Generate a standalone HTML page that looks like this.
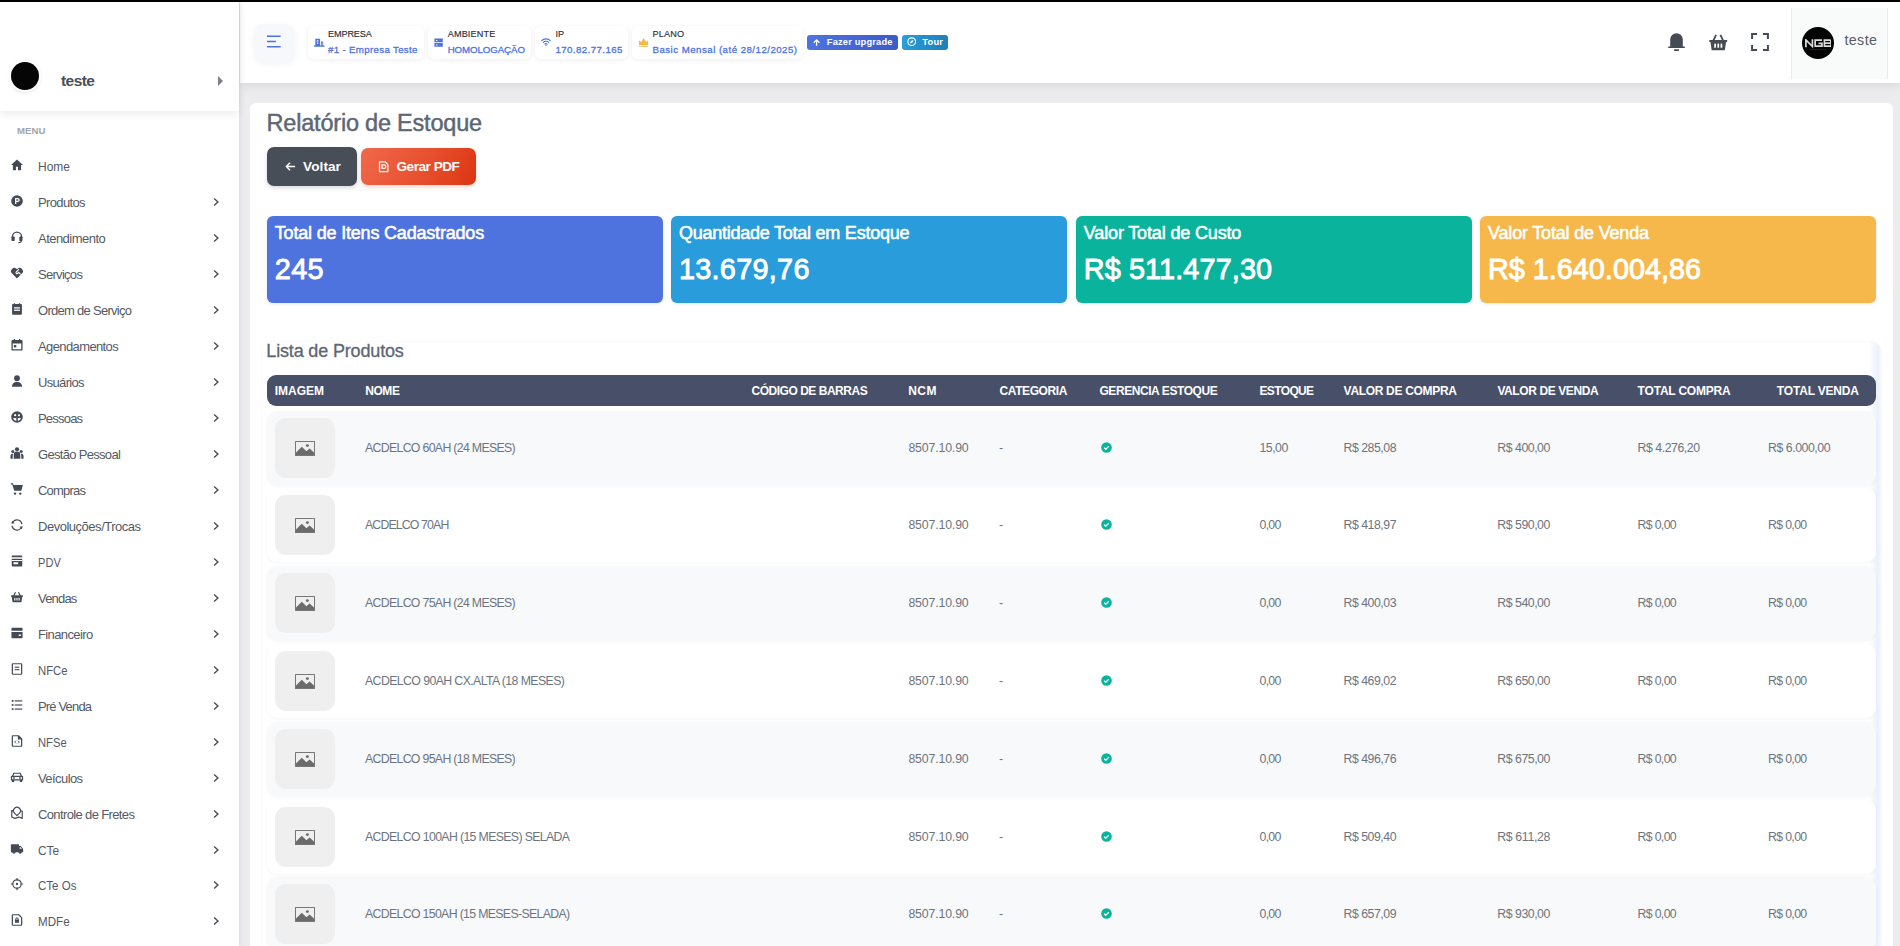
<!DOCTYPE html><html lang="pt-br"><head>
<meta charset="utf-8">
<title>Relatório de Estoque</title>
<style>
*{box-sizing:border-box;margin:0;padding:0}
html,body{width:1900px;height:946px;overflow:hidden}
body{font-family:"Liberation Sans",sans-serif;background:#ececef;position:relative;color:#495057}
span{white-space:nowrap}
#topbar{position:absolute;left:0;top:0;width:1900px;height:2px;background:#000;z-index:50}
/* sidebar */
#sidebar{position:absolute;left:0;top:0;width:239px;height:946px;background:#fff;box-shadow:0 0 5px rgba(60,65,80,.13);z-index:20}
#sb-user{position:absolute;left:0;top:0;width:239px;height:111px;background:#fff;box-shadow:0 3px 8px rgba(40,40,50,.09)}
#sb-user .av{position:absolute;left:11px;top:62px;width:28px;height:28px;border-radius:50%;background:#050505;box-shadow:0 0 0 2px #fff,0 1px 4px rgba(0,0,0,.25)}
#sb-user .nm{position:absolute;left:61px;top:71.600px;font-size:15.5px;font-weight:bold;color:#4a4f57;line-height:18px}
#sb-user .ar{position:absolute;left:218px;top:76px;width:0;height:0;border-left:5px solid #7b8088;border-top:5px solid transparent;border-bottom:5px solid transparent}
.menu-t{position:absolute;left:17px;top:125.4px;font-size:9.6px;font-weight:bold;color:#a0a5ad;line-height:12px}
.mi{position:absolute;left:0;width:239px;height:36px}
.mi svg.ic{position:absolute;left:10px;top:10px;width:14px;height:14px;fill:#434a54}
.mi .tx{position:absolute;left:38px;top:10.700px;font-size:13px;line-height:16px;color:#545a63}
.mi svg.ch{position:absolute;left:210px;top:12px;width:12px;height:12px;fill:none;stroke:#4b515a;stroke-width:1.500}
/* header */
#header{position:absolute;left:240px;top:2px;width:1660px;height:81px;background:#fff;box-shadow:0 2px 9px rgba(50,50,65,.11);z-index:10}
#header>*{position:absolute}
.hbtn{background:#f7f8fb;border-radius:11px;box-shadow:0 2px 6px rgba(80,90,120,.07)}
.hbox{background:#fff;border-radius:6px;box-shadow:0 1px 4px rgba(80,90,120,.10)}
.hl{font-size:9.100px;line-height:10px;color:#2c3036;-webkit-text-stroke:.15px #2c3036}
.hv{font-size:9.700px;line-height:11px;color:#4c73df;-webkit-text-stroke:.28px #4c73df}
.bdg{border-radius:3px;color:#fff;font-weight:bold;font-size:9.300px;line-height:15px}
.bdg span{position:absolute;top:0}
.ubox{background:#f9fbfb;border-left:1px solid #e6ecf5;border-right:1px solid #e6ecf5}
/* content */
#content{position:absolute;left:250px;top:103px;width:1643px;height:900px;background:#fff;border-radius:6px}
#content>*{position:absolute}
.title{font-size:23.500px;line-height:28px;color:#5c6773;-webkit-text-stroke:.45px #5c6773}
.btn{border-radius:7px;color:#fff;font-weight:bold;font-size:13.600px}
.btn span{position:absolute;line-height:16px}
.card{border-radius:6px;color:#fff;height:87px;width:396.300px;top:113px;box-shadow:0 1px 3px rgba(60,65,80,.12)}
.card span{position:absolute;left:8px}
.card .ct{top:7.300px;font-size:18px;line-height:20px;-webkit-text-stroke:.55px #fff}
.card .cv{top:37px;font-size:28.800px;line-height:32px;-webkit-text-stroke:.9px #fff}
.lt{font-size:18px;line-height:20px;color:#5c6773;-webkit-text-stroke:.3px #5c6773}
#thead{background:#485069;border-radius:9px;color:#fff;font-weight:bold;font-size:12px}
#thead span{position:absolute;top:8.500px;line-height:14px}
/* rows */
#rows{position:absolute;left:267px;top:0;width:1609px;height:946px;z-index:5}
.row{position:absolute;left:0;width:1609px;height:74px;border-radius:10px;background:#fff;box-shadow:0 1px 3px rgba(70,80,110,.06)}
.row.odd{background:#f8f9fb}
.row .th{position:absolute;left:8px;top:7px;width:60px;height:60px;border-radius:11px;background:#efefef}
.row .th svg{position:absolute;left:19.800px;top:23.200px;width:20px;height:15px}
.row .c{letter-spacing:-.67px;position:absolute;top:29.500px;font-size:12.300px;line-height:14px;color:#6c747e}
.row .chk{position:absolute;left:833.600px;top:30.600px;width:11px;height:11px}
.row .chk svg{display:block;width:11px;height:11px}

</style>
</head>
<body>
<div id="topbar"></div>
<div id="header">
<div class="hbtn" style="left:14px;top:21.50px;width:40.50px;height:38.50px;"><svg viewBox="0 0 16 14" style="position:absolute;left:12.600px;top:11px;width:15px;height:13.500px"><path d="M0 1.200h14.500M0 6.800h9.500M0 12.300h14.500" stroke="#4c73df" stroke-width="1.700" fill="none"></path></svg></div><div class="hbox" style="left:68px;top:24px;width:116px;height:33px;"></div><div class="hbox" style="left:188px;top:24px;width:103px;height:33px;"></div><div class="hbox" style="left:294.60px;top:24px;width:93.40px;height:33px;"></div><div class="hbox" style="left:391.70px;top:24px;width:171.60px;height:33px;"></div><svg viewBox="0 0 24 24" style="left:74px;top:35.50px;width:10.50px;height:9px;" preserveAspectRatio="none"><path fill="#4c73df" fill-rule="evenodd" d="M3 2h11v18h2V9h5v11h3v3H0v-3h3zM6.500 6v3h3.500V6zM6.500 12v3h3.500v-3zM17.500 12v2.500h1.800V12zM17.500 16v2.500h1.800V16z"></path></svg><svg viewBox="0 0 24 24" style="left:194px;top:35.50px;width:9.20px;height:9px;" preserveAspectRatio="none"><path fill="#4c73df" fill-rule="evenodd" d="M1 1h22v10H1zM1 13h22v10H1zM5 5v3h4V5zM5 17v3h4v-3z"></path></svg><svg viewBox="0 0 24 20" style="left:301.30px;top:35.60px;width:10px;height:8.60px;" preserveAspectRatio="none"><g fill="none" stroke="#4c73df" stroke-width="2.600"><path d="M1 6.500a16 16 0 0122 0"></path><path d="M4.800 10.800a10.500 10.500 0 0114.400 0"></path><path d="M8.400 14.800a5.400 5.400 0 017.200 0"></path></g><path fill="#4c73df" d="M12 20l-2.200-3h4.400z"></path></svg><svg viewBox="0 0 24 24" style="left:398.80px;top:35.60px;width:9.40px;height:9.60px;" preserveAspectRatio="none"><path fill="#f7b84b" d="M0 6l6 4 6-10 6 10 6-4v12H0zM0 20.500h24V24H0z"></path></svg><span class="hl" style="left: 88px; top: 27.4px; letter-spacing: -0.11px;">EMPRESA</span><span class="hv" style="left: 88px; top: 42px; letter-spacing: 0.33px;">#1 - Empresa Teste</span><span class="hl" style="left: 207.7px; top: 27.4px; letter-spacing: 0.16px;">AMBIENTE</span><span class="hv" style="left: 207.7px; top: 42px; letter-spacing: -0.08px;">HOMOLOGAÇÃO</span><span class="hl" style="left: 315.4px; top: 27.4px; letter-spacing: 0.01px;">IP</span><span class="hv" style="left: 315.4px; top: 42px; letter-spacing: 0.43px;">170.82.77.165</span><span class="hl" style="left: 412.5px; top: 27.4px; letter-spacing: 0.16px;">PLANO</span><span class="hv" style="left: 412.5px; top: 42px; letter-spacing: 0.47px;">Basic Mensal (até 28/12/2025)</span><div class="bdg" style="left:567px;top:33px;width:91px;height:15px;background:linear-gradient(100deg,#4d74e2,#3b5bc6)"><svg viewBox="0 0 12 12" style="position:absolute;left:6px;top:3.500px;width:7.200px;height:7px"><path d="M6 11.500V1.500M1.200 6.300L6 1.500l4.800 4.800" fill="none" stroke="#fff" stroke-width="2.200"></path></svg><span style="left: 19.8px; letter-spacing: 0.18px;">Fazer upgrade</span></div><div class="bdg" style="left:662px;top:33px;width:46px;height:15px;background:linear-gradient(100deg,#2a9edc,#1d7fb6)"><svg viewBox="0 0 12 12" style="position:absolute;left:5px;top:2.200px;width:9.400px;height:9.400px"><circle cx="6" cy="6" r="4.900" fill="none" stroke="#fff" stroke-width="1.500"></circle><path d="M8.300 3.700L5 5 3.700 8.300 7 7z" fill="#fff"></path></svg><span style="left: 20.2px; letter-spacing: 0.28px;">Tour</span></div><svg viewBox="0 0 24 24" style="left:1426px;top:29px;width:21px;height:22px;"><path fill="#444b55" d="M12 2a7.200 7.200 0 017.200 7.200V17H21.500v1.900h-19V17H4.800V9.200A7.200 7.200 0 0112 2zM9.300 20.300h5.400v1.900H9.300z"></path></svg><svg viewBox="0 0 24 24" style="left:1468px;top:30px;width:20.50px;height:20.50px;"><path fill="#444b55" d="M1.600 9.300h20.800v2.400h-1.300L19.700 21.500H4.300L2.900 11.700H1.600z"></path><path fill="none" stroke="#444b55" stroke-width="2.100" d="M6.200 10l3.300-6.700M17.800 10l-3.300-6.700"></path><rect x="7.300" y="13.600" width="2" height="4.800" fill="#fff"></rect><rect x="11" y="13.600" width="2" height="4.800" fill="#fff"></rect><rect x="14.700" y="13.600" width="2" height="4.800" fill="#fff"></rect></svg><svg viewBox="0 0 24 24" style="left:1510px;top:30px;width:20px;height:20px;"><path fill="none" stroke="#444b55" stroke-width="2.400" d="M2.500 8.500v-6h6M15.500 2.500h6v6M21.500 15.500v6h-6M8.500 21.500h-6v-6"></path></svg><div class="ubox" style="left:1551px;top:6px;width:97px;height:70.50px;"></div><div style="left:1562px;top:25px;width:32px;height:32px;border-radius:50%;background:#030303"><svg viewBox="0 0 27 12" style="position:absolute;left:2.800px;top:11.600px;width:26.600px;height:11.820px"><g fill="none" stroke="#dadada" stroke-width="1.750"><path d="M.9 8.300V.9L7.500 7.600V.2"></path><path d="M17.300 1.050H10.300V7.350H17.200V4.350H13.700"></path><path d="M19.700 1.050h5.400q1.300 0 1.300 1.550t-1.300 1.550H19.700M25.300 4.150q1.400 0 1.400 1.600t-1.400 1.600H19.700V.2"></path></g><path d="M4.500 10.700h8.500" stroke="#444" stroke-width=".45"></path><path d="M13.500 10.700h8" stroke="#18566f" stroke-width=".45"></path></svg></div><span style="left: 1604.4px; top: 28px; font-size: 14.3px; line-height: 20px; color: rgb(85, 92, 102); letter-spacing: 0.4px;">teste</span>
</div>
<div id="sidebar">
  <div id="sb-user"><div class="av"></div><span class="nm" style="letter-spacing: -0.55px;">teste</span><div class="ar"></div></div>
  <span class="menu-t" style="letter-spacing: 0.08px;">MENU</span>
<div class="mi" style="top:148px"><svg class="ic" viewBox="0 0 24 24"><path d="M12 2.6L1.8 11.8H5V21h5.2v-6h3.6v6H19v-9.2h3.2z"></path></svg><span class="tx" style="letter-spacing: 0px; transform-origin: 0px 50%; transform: scaleX(0.923);">Home</span></div>
<div class="mi" style="top:184px"><svg class="ic" viewBox="0 0 24 24"><path fill-rule="evenodd" d="M12 2a10 10 0 100 20 10 10 0 000-20zM8.7 6.8h4.6a3.4 3.4 0 010 6.8h-2.4v3.6H8.7zM10.9 8.9v2.6h2.3a1.3 1.3 0 000-2.6z"></path></svg><span class="tx" style="letter-spacing: -0.64px;">Produtos</span><svg class="ch" viewBox="0 0 12 12"><path d="M4.100 2.500L7.900 6 4.100 9.500"></path></svg></div>
<div class="mi" style="top:220px"><svg class="ic" viewBox="0 0 24 24"><path fill="none" stroke="#434a54" stroke-width="2.4" d="M4.2 14V11.5a7.8 7.8 0 0115.6 0V14"></path><rect x="2.6" y="11" width="5.4" height="8" rx="1.6"></rect><rect x="16" y="11" width="5.4" height="8" rx="1.6"></rect><path fill="none" stroke="#434a54" stroke-width="2" d="M19.5 18.5c0 2.2-2 3.2-5 3.2"></path></svg><span class="tx" style="letter-spacing: -0.53px;">Atendimento</span><svg class="ch" viewBox="0 0 12 12"><path d="M4.100 2.500L7.900 6 4.100 9.500"></path></svg></div>
<div class="mi" style="top:256px"><svg class="ic" viewBox="0 0 24 24"><path d="M12 21.5L3.2 12.6a5.6 5.6 0 017.9-7.9l.9.9.9-.9a5.6 5.6 0 017.9 7.9z"></path><path fill="none" stroke="#fff" stroke-width="1.9" stroke-linecap="round" d="M14.8 6.2l-4 4a1.6 1.6 0 002.3 2.3l1.6-1.6 3 3"></path></svg><span class="tx" style="letter-spacing: -0.71px;">Serviços</span><svg class="ch" viewBox="0 0 12 12"><path d="M4.100 2.500L7.900 6 4.100 9.500"></path></svg></div>
<div class="mi" style="top:292px"><svg class="ic" viewBox="0 0 24 24"><path d="M6.5 2h2.2v1.6h6.6V2h2.2v1.6H19a1.4 1.4 0 011.4 1.4V20.600a1.4 1.4 0 01-1.400 1.4H5A1.4 1.4 0 013.600 20.600V5A1.400 1.400 0 015 3.600h1.500z"></path><rect x="7" y="9" width="10" height="2.200" fill="#fff"></rect><rect x="7" y="13" width="10" height="2.200" fill="#fff"></rect></svg><span class="tx" style="letter-spacing: -0.72px;">Ordem de Serviço</span><svg class="ch" viewBox="0 0 12 12"><path d="M4.100 2.500L7.900 6 4.100 9.500"></path></svg></div>
<div class="mi" style="top:328px"><svg class="ic" viewBox="0 0 24 24"><path fill-rule="evenodd" d="M6.500 1.500h2.200v2h6.600v-2h2.200v2H20a1.500 1.500 0 011.500 1.500V20a1.500 1.500 0 01-1.500 1.500H4A1.500 1.500 0 012.500 20V5A1.500 1.500 0 014 3.500h2.500zM4.700 9.500V19.300h14.600V9.500z"></path><rect x="6.600" y="12" width="4.200" height="4.200"></rect></svg><span class="tx" style="letter-spacing: -0.61px;">Agendamentos</span><svg class="ch" viewBox="0 0 12 12"><path d="M4.100 2.500L7.900 6 4.100 9.500"></path></svg></div>
<div class="mi" style="top:364px"><svg class="ic" viewBox="0 0 24 24"><circle cx="12" cy="7.300" r="5"></circle><path d="M3.200 22c0-4.700 3.500-8.200 8.800-8.200s8.800 3.500 8.800 8.200z"></path></svg><span class="tx" style="letter-spacing: -0.67px;">Usuários</span><svg class="ch" viewBox="0 0 12 12"><path d="M4.100 2.500L7.900 6 4.100 9.500"></path></svg></div>
<div class="mi" style="top:400px"><svg class="ic" viewBox="0 0 24 24"><circle cx="12" cy="12" r="10"></circle><circle cx="8.800" cy="8.800" r="1.900" fill="#fff"></circle><rect x="13.500" y="7.600" width="3.600" height="3" fill="#fff"></rect><path fill="#fff" d="M10.800 13.600H5.200A6.800 6.800 0 0010.800 18.800zM13.400 13.600h5.400a6.800 6.800 0 01-5.400 5.200z"></path></svg><span class="tx" style="letter-spacing: -0.8px;">Pessoas</span><svg class="ch" viewBox="0 0 12 12"><path d="M4.100 2.500L7.900 6 4.100 9.500"></path></svg></div>
<div class="mi" style="top:436px"><svg class="ic" viewBox="0 0 24 24"><circle cx="12" cy="5.600" r="3.600"></circle><path d="M6.400 22v-6.800a5.600 5.600 0 0111.200 0V22z"></path><circle cx="4.800" cy="9.600" r="2.600"></circle><circle cx="19.200" cy="9.600" r="2.600"></circle><path d="M.800 22v-4.800a4 4 0 014.600-4 7 7 0 00-.700 3V22zM23.200 22v-4.800a4 4 0 00-4.600-4 7 7 0 01.700 3V22z"></path></svg><span class="tx" style="letter-spacing: -0.69px;">Gestão Pessoal</span><svg class="ch" viewBox="0 0 12 12"><path d="M4.100 2.500L7.900 6 4.100 9.500"></path></svg></div>
<div class="mi" style="top:472px"><svg class="ic" viewBox="0 0 24 24"><path d="M1.500 2h3.700l.9 3H22l-2.600 10.200H7.200L4 4.200H1.500z"></path><circle cx="8.600" cy="19.800" r="2"></circle><circle cx="17.600" cy="19.800" r="2"></circle></svg><span class="tx" style="letter-spacing: -0.81px;">Compras</span><svg class="ch" viewBox="0 0 12 12"><path d="M4.100 2.500L7.900 6 4.100 9.500"></path></svg></div>
<div class="mi" style="top:508px"><svg class="ic" viewBox="0 0 24 24"><path fill="none" stroke="#434a54" stroke-width="2" d="M3.600 13.500A8.500 8.500 0 0019 17.200M20.400 10.500A8.500 8.500 0 005 6.800"></path><path d="M21.800 14l-5.800 1 4.300 4.300zM2.200 10l5.800-1-4.300-4.300z"></path></svg><span class="tx" style="letter-spacing: -0.48px;">Devoluções/Trocas</span><svg class="ch" viewBox="0 0 12 12"><path d="M4.100 2.500L7.900 6 4.100 9.500"></path></svg></div>
<div class="mi" style="top:544px"><svg class="ic" viewBox="0 0 24 24"><rect x="3" y="2.500" width="18" height="3.200" rx=".6"></rect><path fill-rule="evenodd" d="M3 8h18v12.300a1.200 1.200 0 01-1.200 1.200H4.200A1.200 1.200 0 013 20.300zM6 14.200v3.300h8v-3.300z"></path><rect x="3" y="10.300" width="18" height="1.700" fill="#fff"></rect></svg><span class="tx" style="letter-spacing: 0px; transform-origin: 0px 50%; transform: scaleX(0.853);">PDV</span><svg class="ch" viewBox="0 0 12 12"><path d="M4.100 2.500L7.900 6 4.100 9.500"></path></svg></div>
<div class="mi" style="top:580px"><svg class="ic" viewBox="0 0 24 24"><path d="M1.800 9.200h20.400v2.300h-1.200L19.600 21H4.400L3 11.500H1.800z"></path><path fill="none" stroke="#434a54" stroke-width="2" d="M6.300 10l3.200-6.200M17.700 10l-3.200-6.200"></path><rect x="7.400" y="13.500" width="1.900" height="4.500" fill="#fff"></rect><rect x="11.050" y="13.500" width="1.900" height="4.500" fill="#fff"></rect><rect x="14.700" y="13.500" width="1.900" height="4.500" fill="#fff"></rect></svg><span class="tx" style="letter-spacing: -0.8px;">Vendas</span><svg class="ch" viewBox="0 0 12 12"><path d="M4.100 2.500L7.900 6 4.100 9.500"></path></svg></div>
<div class="mi" style="top:616px"><svg class="ic" viewBox="0 0 24 24"><path d="M2.500 4.200A1.200 1.200 0 013.700 3h16.600a1.200 1.200 0 011.200 1.200V8h-19zM2.500 10.200h19v9.600a1.200 1.200 0 01-1.200 1.200H3.700a1.200 1.200 0 01-1.200-1.200z"></path><rect x="15" y="14.500" width="3.600" height="2.600" fill="#fff"></rect></svg><span class="tx" style="letter-spacing: -0.61px;">Financeiro</span><svg class="ch" viewBox="0 0 12 12"><path d="M4.100 2.500L7.900 6 4.100 9.500"></path></svg></div>
<div class="mi" style="top:652px"><svg class="ic" viewBox="0 0 24 24"><rect x="4" y="3" width="16" height="18" rx="1.200" fill="none" stroke="#434a54" stroke-width="2.100"></rect><rect x="8" y="8" width="8" height="1.900"></rect><rect x="8" y="12.200" width="8" height="1.900"></rect></svg><span class="tx" style="letter-spacing: 0px; transform-origin: 0px 50%; transform: scaleX(0.869);">NFCe</span><svg class="ch" viewBox="0 0 12 12"><path d="M4.100 2.500L7.900 6 4.100 9.500"></path></svg></div>
<div class="mi" style="top:688px"><svg class="ic" viewBox="0 0 24 24"><rect x="8" y="4" width="13" height="2"></rect><rect x="8" y="11" width="13" height="2"></rect><rect x="8" y="18" width="13" height="2"></rect><rect x="3" y="3.500" width="3" height="3"></rect><rect x="3" y="10.500" width="3" height="3"></rect><rect x="3" y="17.500" width="3" height="3"></rect></svg><span class="tx" style="letter-spacing: -0.84px;">Pré Venda</span><svg class="ch" viewBox="0 0 12 12"><path d="M4.100 2.500L7.900 6 4.100 9.500"></path></svg></div>
<div class="mi" style="top:724px"><svg class="ic" viewBox="0 0 24 24"><path fill="none" stroke="#434a54" stroke-width="2.100" stroke-linejoin="round" d="M14.500 3H5.200A1.200 1.200 0 004 4.200v15.600A1.200 1.200 0 005.200 21h13.600a1.200 1.200 0 001.200-1.200V8.500zM14.500 3v5.500H20"></path><path fill="none" stroke="#434a54" stroke-width="1.600" d="M10.300 11.500L8 13.800l2.300 2.300M13.700 11.500l2.300 2.300-2.300 2.300"></path></svg><span class="tx" style="letter-spacing: 0px; transform-origin: 0px 50%; transform: scaleX(0.861);">NFSe</span><svg class="ch" viewBox="0 0 12 12"><path d="M4.100 2.500L7.900 6 4.100 9.500"></path></svg></div>
<div class="mi" style="top:760px"><svg class="ic" viewBox="0 0 24 24"><path fill-rule="evenodd" d="M5.800 4.500h12.400l2.300 5.300 2 .8V18h-1.700v2.500h-4V18H7.200v2.500h-4V18H1.500v-7.400l2-.8zM7.200 6.600L5.900 9.800h12.200l-1.300-3.200zM3.600 11.900v4h16.800v-4z"></path><rect x="5" y="12.700" width="3.600" height="2.100"></rect><rect x="15.400" y="12.700" width="3.600" height="2.100"></rect></svg><span class="tx" style="letter-spacing: -0.58px;">Veículos</span><svg class="ch" viewBox="0 0 12 12"><path d="M4.100 2.500L7.900 6 4.100 9.500"></path></svg></div>
<div class="mi" style="top:796px"><svg class="ic" viewBox="0 0 24 24"><path fill="none" stroke="#434a54" stroke-width="2" stroke-linejoin="round" d="M5.500 8.500L3 7.500V19l5.500 2.200 7-2.200 5.500 2.200V9l-2.500-1"></path><path fill="none" stroke="#434a54" stroke-width="2" d="M12 16.500l-4.200-4.300a5.900 5.900 0 118.400 0z"></path></svg><span class="tx" style="letter-spacing: -0.63px;">Controle de Fretes</span><svg class="ch" viewBox="0 0 12 12"><path d="M4.100 2.500L7.900 6 4.100 9.500"></path></svg></div>
<div class="mi" style="top:832px"><svg class="ic" viewBox="0 0 24 24"><path d="M1.500 5.200A1.200 1.200 0 012.700 4h12.600v3h3.500l3.700 5v5.500h-2.100a3.100 3.100 0 01-6.100 0H9.800a3.100 3.100 0 01-6.100 0H1.500z"></path><path fill="#fff" d="M16.500 8.800h1.900l2 2.900h-3.900z"></path></svg><span class="tx" style="letter-spacing: 0px; transform-origin: 0px 50%; transform: scaleX(0.917);">CTe</span><svg class="ch" viewBox="0 0 12 12"><path d="M4.100 2.500L7.900 6 4.100 9.500"></path></svg></div>
<div class="mi" style="top:867px"><svg class="ic" viewBox="0 0 24 24"><circle cx="12" cy="12" r="7.200" fill="none" stroke="#434a54" stroke-width="2"></circle><circle cx="12" cy="12" r="2"></circle><path fill="none" stroke="#434a54" stroke-width="2" d="M12 1.500v4M12 18.500v4M1.500 12h4M18.500 12h4"></path></svg><span class="tx" style="letter-spacing: 0px; transform-origin: 0px 50%; transform: scaleX(0.886);">CTe Os</span><svg class="ch" viewBox="0 0 12 12"><path d="M4.100 2.500L7.900 6 4.100 9.500"></path></svg></div>
<div class="mi" style="top:903px"><svg class="ic" viewBox="0 0 24 24"><path fill="none" stroke="#434a54" stroke-width="2.100" stroke-linejoin="round" d="M15 3H5.200A1.200 1.200 0 004 4.200v15.600A1.200 1.200 0 005.200 21h13.600a1.200 1.200 0 001.200-1.200V8z"></path><rect x="8.500" y="11.500" width="7" height="5.200"></rect><path fill="none" stroke="#434a54" stroke-width="1.700" d="M10 12V10.300a2 2 0 014 0V12"></path></svg><span class="tx" style="letter-spacing: 0px; transform-origin: 0px 50%; transform: scaleX(0.893);">MDFe</span><svg class="ch" viewBox="0 0 12 12"><path d="M4.100 2.500L7.900 6 4.100 9.500"></path></svg></div>

</div>
<div id="content">
<span class="title" style="left: 16.6px; top: 6.3px; letter-spacing: -0.21px;">Relatório de Estoque</span><div class="btn" style="left:17px;top:44px;width:90px;height:39px;background:#484e57;box-shadow:0 2px 4px rgba(40,45,55,.18)"><svg viewBox="0 0 12 12" style="position:absolute;left:18px;top:13.800px;width:11px;height:11px"><path d="M11 6H1.500M5.500 1.800L1.400 6l4.100 4.200" fill="none" stroke="#fff" stroke-width="1.500"></path></svg><span style="left: 36px; top: 11.7px; letter-spacing: 0.08px;">Voltar</span></div><div class="btn" style="left:111px;top:45px;width:115px;height:37px;background:linear-gradient(115deg,#ef6648 5%,#e7502f 55%,#dd3512 100%);box-shadow:0 2px 4px rgba(220,60,30,.20)"><svg viewBox="0 0 24 24" style="position:absolute;left:16px;top:12.100px;width:13.400px;height:13.400px"><path fill="none" stroke="#fff" stroke-width="2.200" stroke-linejoin="round" d="M14.500 3.200H4.500v17.600h15V8.200zM14.500 3.200"></path><path fill="none" stroke="#fff" stroke-width="2.200" d="M9 8.800h3.500a3.200 3.200 0 010 6.400H9z"></path></svg><span style="left: 35.5px; top: 10.8px; letter-spacing: -0.48px;">Gerar PDF</span></div><div class="card" style="left:16.8px;background:#4e73df"><span class="ct" style="letter-spacing: -0.19px;">Total de Itens Cadastrados</span><span class="cv" style="letter-spacing: 0.38px;">245</span></div><div class="card" style="left:420.9px;background:#299cdb"><span class="ct" style="letter-spacing: -0.24px;">Quantidade Total em Estoque</span><span class="cv" style="letter-spacing: 0.3px;">13.679,76</span></div><div class="card" style="left:825.8px;background:#0ab39c"><span class="ct" style="letter-spacing: -0.15px;">Valor Total de Custo</span><span class="cv" style="letter-spacing: 0.12px;">R$ 511.477,30</span></div><div class="card" style="left:1230.0px;background:#f7b84b"><span class="ct" style="letter-spacing: -0.18px;">Valor Total de Venda</span><span class="cv" style="letter-spacing: 0px;">R$ 1.640.004,86</span></div><div style="left:12px;top:239px;width:1619px;height:700px;border-radius:9px;box-shadow:0 0 0 1px rgba(228,232,242,.22);background:linear-gradient(90deg,rgba(255,255,255,0) 1607px,rgba(222,230,250,.6) 1616px,rgba(238,242,252,.5) 1619px)"></div><span class="lt" style="left: 16.3px; top: 238px; letter-spacing: -0.16px;">Lista de Produtos</span><div id="thead" style="left:17px;top:272px;width:1609px;height:31px;"><span style="left: 7.8px; letter-spacing: -0.05px;">IMAGEM</span><span style="left: 98.2px; letter-spacing: -0.43px;">NOME</span><span style="left: 484.5px; letter-spacing: -0.48px;">CÓDIGO DE BARRAS</span><span style="left: 641.3px; letter-spacing: 0.39px;">NCM</span><span style="left: 732.5px; letter-spacing: -0.4px;">CATEGORIA</span><span style="left: 832.4px; letter-spacing: -0.42px;">GERENCIA ESTOQUE</span><span style="left: 992.5px; letter-spacing: -0.64px;">ESTOQUE</span><span style="left: 1076.6px; letter-spacing: -0.32px;">VALOR DE COMPRA</span><span style="left: 1230.4px; letter-spacing: -0.4px;">VALOR DE VENDA</span><span style="left: 1370.6px; letter-spacing: -0.2px;">TOTAL COMPRA</span><span style="left: 1509.8px; letter-spacing: -0.18px;">TOTAL VENDA</span></div>
</div>
<div id="rows">
<div class="row odd" style="top:411.00px"><div class="th"><svg viewBox="0 0 20 16" preserveAspectRatio="none"><path fill-rule="evenodd" fill="#777" d="M.6 0h18.800a.6.600 0 01.600.600v14.800a.6.600 0 01-.600.600H.600a.600.600 0 01-.600-.600V.600A.600.600 0 01.600 0zM1 1v14h18V1z"></path><path fill="#6b6b6b" d="M1 15V12.200l5.800-6.200 4.600 4.900 3.200-3 4.400 4.400V15z"></path><circle cx="12.400" cy="4.900" r="1.500" fill="#6b6b6b"></circle></svg></div><span class="c" style="left: 98px; letter-spacing: -0.67px;">ACDELCO 60AH (24 MESES)</span><span class="c" style="left: 641.4px; letter-spacing: -0.14px;">8507.10.90</span><span class="c" style="left:732px">-</span><span class="chk"><svg viewBox="0 0 24 24"><circle cx="12" cy="12" r="11.500" fill="#0ab39c"></circle><path d="M6.800 12.300l3.600 3.600 6.800-6.900" fill="none" stroke="#fff" stroke-width="2.600"></path></svg></span><span class="c" style="left: 992.5px; letter-spacing: -0.5px;">15,00</span><span class="c" style="left: 1076.5px; letter-spacing: -0.47px;">R$ 285,08</span><span class="c" style="left: 1230.3px; letter-spacing: -0.47px;">R$ 400,00</span><span class="c" style="left: 1370.5px; letter-spacing: -0.45px;">R$ 4.276,20</span><span class="c" style="left: 1501px; letter-spacing: -0.45px;">R$ 6.000,00</span></div>
<div class="row" style="top:488.00px"><div class="th"><svg viewBox="0 0 20 16" preserveAspectRatio="none"><path fill-rule="evenodd" fill="#777" d="M.6 0h18.800a.6.600 0 01.600.600v14.800a.6.600 0 01-.600.600H.600a.600.600 0 01-.600-.600V.600A.600.600 0 01.600 0zM1 1v14h18V1z"></path><path fill="#6b6b6b" d="M1 15V12.200l5.800-6.200 4.600 4.900 3.200-3 4.400 4.400V15z"></path><circle cx="12.400" cy="4.900" r="1.500" fill="#6b6b6b"></circle></svg></div><span class="c" style="left: 98px; letter-spacing: -0.85px;">ACDELCO 70AH</span><span class="c" style="left: 641.4px; letter-spacing: -0.14px;">8507.10.90</span><span class="c" style="left:732px">-</span><span class="chk"><svg viewBox="0 0 24 24"><circle cx="12" cy="12" r="11.500" fill="#0ab39c"></circle><path d="M6.800 12.300l3.600 3.600 6.800-6.900" fill="none" stroke="#fff" stroke-width="2.600"></path></svg></span><span class="c" style="left: 992.5px; letter-spacing: -0.71px;">0,00</span><span class="c" style="left: 1076.5px; letter-spacing: -0.47px;">R$ 418,97</span><span class="c" style="left: 1230.3px; letter-spacing: -0.47px;">R$ 590,00</span><span class="c" style="left: 1370.5px; letter-spacing: -0.65px;">R$ 0,00</span><span class="c" style="left: 1501px; letter-spacing: -0.65px;">R$ 0,00</span></div>
<div class="row odd" style="top:566.00px"><div class="th"><svg viewBox="0 0 20 16" preserveAspectRatio="none"><path fill-rule="evenodd" fill="#777" d="M.6 0h18.800a.6.600 0 01.600.600v14.800a.6.600 0 01-.600.600H.600a.600.600 0 01-.600-.600V.600A.600.600 0 01.600 0zM1 1v14h18V1z"></path><path fill="#6b6b6b" d="M1 15V12.200l5.800-6.200 4.600 4.900 3.200-3 4.400 4.400V15z"></path><circle cx="12.400" cy="4.900" r="1.500" fill="#6b6b6b"></circle></svg></div><span class="c" style="left: 98px; letter-spacing: -0.67px;">ACDELCO 75AH (24 MESES)</span><span class="c" style="left: 641.4px; letter-spacing: -0.14px;">8507.10.90</span><span class="c" style="left:732px">-</span><span class="chk"><svg viewBox="0 0 24 24"><circle cx="12" cy="12" r="11.500" fill="#0ab39c"></circle><path d="M6.800 12.300l3.600 3.600 6.800-6.900" fill="none" stroke="#fff" stroke-width="2.600"></path></svg></span><span class="c" style="left: 992.5px; letter-spacing: -0.71px;">0,00</span><span class="c" style="left: 1076.5px; letter-spacing: -0.47px;">R$ 400,03</span><span class="c" style="left: 1230.3px; letter-spacing: -0.47px;">R$ 540,00</span><span class="c" style="left: 1370.5px; letter-spacing: -0.65px;">R$ 0,00</span><span class="c" style="left: 1501px; letter-spacing: -0.65px;">R$ 0,00</span></div>
<div class="row" style="top:644.00px"><div class="th"><svg viewBox="0 0 20 16" preserveAspectRatio="none"><path fill-rule="evenodd" fill="#777" d="M.6 0h18.800a.6.600 0 01.600.600v14.800a.6.600 0 01-.600.600H.600a.600.600 0 01-.600-.600V.600A.600.600 0 01.600 0zM1 1v14h18V1z"></path><path fill="#6b6b6b" d="M1 15V12.200l5.800-6.200 4.600 4.900 3.200-3 4.400 4.400V15z"></path><circle cx="12.400" cy="4.900" r="1.500" fill="#6b6b6b"></circle></svg></div><span class="c" style="left: 98px; letter-spacing: -0.59px;">ACDELCO 90AH CX.ALTA (18 MESES)</span><span class="c" style="left: 641.4px; letter-spacing: -0.14px;">8507.10.90</span><span class="c" style="left:732px">-</span><span class="chk"><svg viewBox="0 0 24 24"><circle cx="12" cy="12" r="11.500" fill="#0ab39c"></circle><path d="M6.800 12.300l3.600 3.600 6.800-6.900" fill="none" stroke="#fff" stroke-width="2.600"></path></svg></span><span class="c" style="left: 992.5px; letter-spacing: -0.71px;">0,00</span><span class="c" style="left: 1076.5px; letter-spacing: -0.47px;">R$ 469,02</span><span class="c" style="left: 1230.3px; letter-spacing: -0.47px;">R$ 650,00</span><span class="c" style="left: 1370.5px; letter-spacing: -0.65px;">R$ 0,00</span><span class="c" style="left: 1501px; letter-spacing: -0.65px;">R$ 0,00</span></div>
<div class="row odd" style="top:722.00px"><div class="th"><svg viewBox="0 0 20 16" preserveAspectRatio="none"><path fill-rule="evenodd" fill="#777" d="M.6 0h18.800a.6.600 0 01.600.600v14.800a.6.600 0 01-.600.600H.600a.600.600 0 01-.600-.600V.600A.600.600 0 01.600 0zM1 1v14h18V1z"></path><path fill="#6b6b6b" d="M1 15V12.200l5.800-6.200 4.600 4.900 3.200-3 4.400 4.400V15z"></path><circle cx="12.400" cy="4.900" r="1.500" fill="#6b6b6b"></circle></svg></div><span class="c" style="left: 98px; letter-spacing: -0.67px;">ACDELCO 95AH (18 MESES)</span><span class="c" style="left: 641.4px; letter-spacing: -0.14px;">8507.10.90</span><span class="c" style="left:732px">-</span><span class="chk"><svg viewBox="0 0 24 24"><circle cx="12" cy="12" r="11.500" fill="#0ab39c"></circle><path d="M6.800 12.300l3.600 3.600 6.800-6.900" fill="none" stroke="#fff" stroke-width="2.600"></path></svg></span><span class="c" style="left: 992.5px; letter-spacing: -0.71px;">0,00</span><span class="c" style="left: 1076.5px; letter-spacing: -0.47px;">R$ 496,76</span><span class="c" style="left: 1230.3px; letter-spacing: -0.47px;">R$ 675,00</span><span class="c" style="left: 1370.5px; letter-spacing: -0.65px;">R$ 0,00</span><span class="c" style="left: 1501px; letter-spacing: -0.65px;">R$ 0,00</span></div>
<div class="row" style="top:800.00px"><div class="th"><svg viewBox="0 0 20 16" preserveAspectRatio="none"><path fill-rule="evenodd" fill="#777" d="M.6 0h18.800a.6.600 0 01.600.600v14.800a.6.600 0 01-.600.600H.600a.600.600 0 01-.600-.600V.600A.600.600 0 01.600 0zM1 1v14h18V1z"></path><path fill="#6b6b6b" d="M1 15V12.200l5.800-6.200 4.600 4.900 3.200-3 4.400 4.400V15z"></path><circle cx="12.400" cy="4.900" r="1.500" fill="#6b6b6b"></circle></svg></div><span class="c" style="left: 98px; letter-spacing: -0.64px;">ACDELCO 100AH (15 MESES) SELADA</span><span class="c" style="left: 641.4px; letter-spacing: -0.14px;">8507.10.90</span><span class="c" style="left:732px">-</span><span class="chk"><svg viewBox="0 0 24 24"><circle cx="12" cy="12" r="11.500" fill="#0ab39c"></circle><path d="M6.800 12.300l3.600 3.600 6.800-6.900" fill="none" stroke="#fff" stroke-width="2.600"></path></svg></span><span class="c" style="left: 992.5px; letter-spacing: -0.71px;">0,00</span><span class="c" style="left: 1076.5px; letter-spacing: -0.47px;">R$ 509,40</span><span class="c" style="left: 1230.3px; letter-spacing: -0.36px;">R$ 611,28</span><span class="c" style="left: 1370.5px; letter-spacing: -0.65px;">R$ 0,00</span><span class="c" style="left: 1501px; letter-spacing: -0.65px;">R$ 0,00</span></div>
<div class="row odd" style="top:877.00px"><div class="th"><svg viewBox="0 0 20 16" preserveAspectRatio="none"><path fill-rule="evenodd" fill="#777" d="M.6 0h18.800a.6.600 0 01.600.600v14.800a.6.600 0 01-.600.600H.600a.600.600 0 01-.600-.600V.600A.600.600 0 01.600 0zM1 1v14h18V1z"></path><path fill="#6b6b6b" d="M1 15V12.200l5.800-6.200 4.600 4.900 3.200-3 4.400 4.400V15z"></path><circle cx="12.400" cy="4.900" r="1.500" fill="#6b6b6b"></circle></svg></div><span class="c" style="left: 98px; letter-spacing: -0.66px;">ACDELCO 150AH (15 MESES-SELADA)</span><span class="c" style="left: 641.4px; letter-spacing: -0.14px;">8507.10.90</span><span class="c" style="left:732px">-</span><span class="chk"><svg viewBox="0 0 24 24"><circle cx="12" cy="12" r="11.500" fill="#0ab39c"></circle><path d="M6.800 12.300l3.600 3.600 6.800-6.900" fill="none" stroke="#fff" stroke-width="2.600"></path></svg></span><span class="c" style="left: 992.5px; letter-spacing: -0.71px;">0,00</span><span class="c" style="left: 1076.5px; letter-spacing: -0.47px;">R$ 657,09</span><span class="c" style="left: 1230.3px; letter-spacing: -0.47px;">R$ 930,00</span><span class="c" style="left: 1370.5px; letter-spacing: -0.65px;">R$ 0,00</span><span class="c" style="left: 1501px; letter-spacing: -0.65px;">R$ 0,00</span></div>

</div>


</body></html>
